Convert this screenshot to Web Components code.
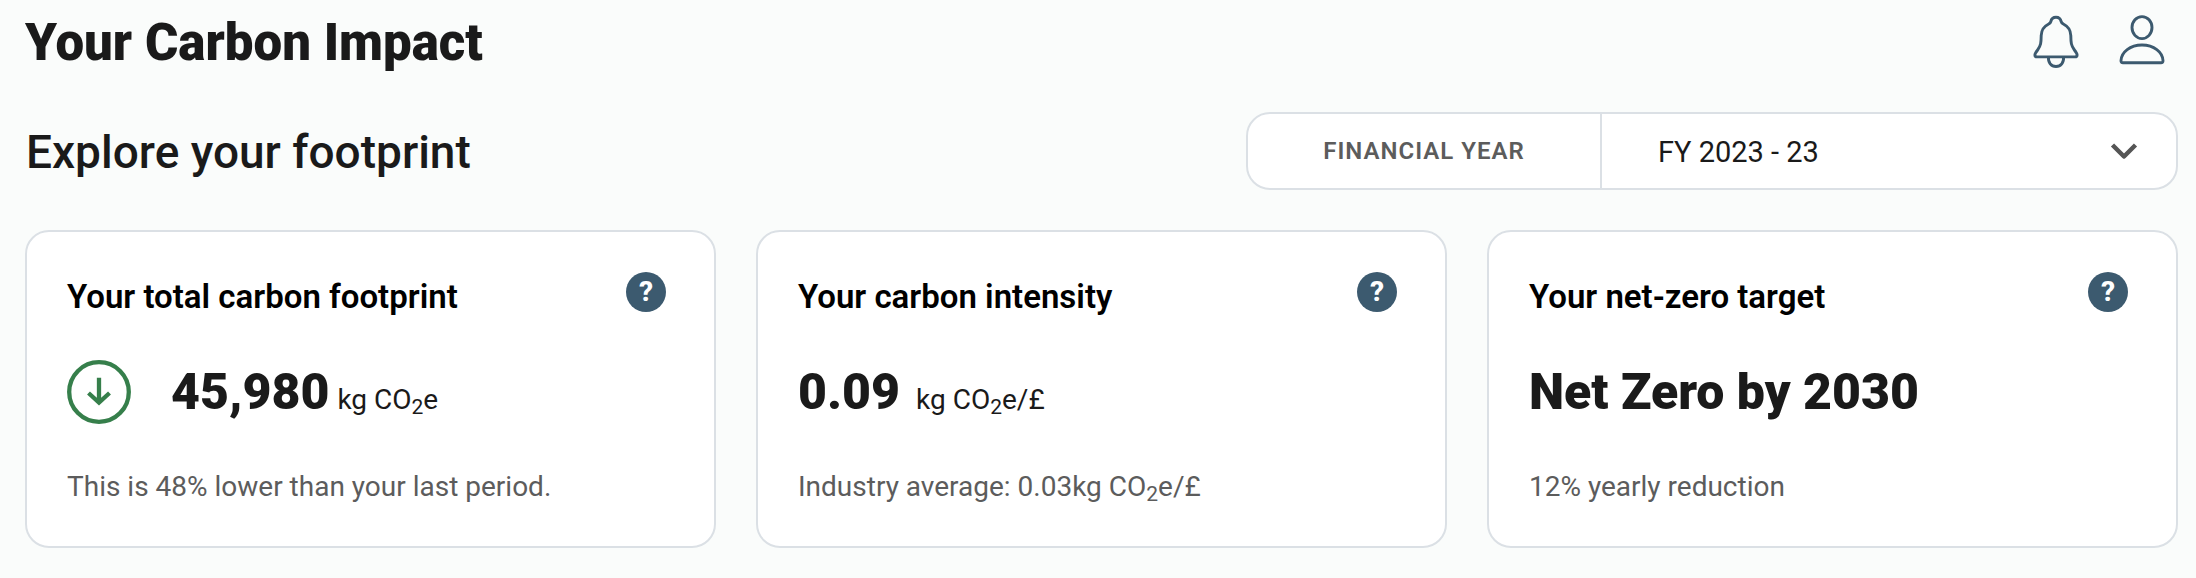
<!DOCTYPE html>
<html lang="en">
<head>
<meta charset="utf-8">
<meta name="viewport" content="width=device-width, initial-scale=1">
<title>Your Carbon Impact</title>
<style>
  body {
    margin: 0;
    background: #fafcfb;
    color: #1a1a1a;
    font-family: Roboto, "Liberation Sans", sans-serif;
    --line: #dbe0e5;
    --accent: #3c5a6f;
    --muted: #5c5c5c;
  }
</style>
</head>
<body>
<carbon-dashboard></carbon-dashboard>

<template id="dashboard">
  <style>
    :host { display: block; padding: 12px 18px 30px 25px; }
    main { display: grid; gap: 40px; }
    header, .explore { display: flex; align-items: center; justify-content: space-between; gap: 40px; }
    h1, h2 { margin: 0; line-height: 60px; }
    h1 { font-size: 51px; font-weight: 900; padding-top: 2px; line-height: 58px; }
    h2 { font-size: 46px; font-weight: 500; padding: 2px 0 0 1px; }
    nav { display: flex; gap: 38px; padding-right: 12px; }
    .cards { display: grid; grid-template-columns: repeat(3, 1fr); gap: 40px; }
    year-select { flex: 0 1 932px; }
  </style>
  <main>
    <header>
      <h1>Your Carbon Impact</h1>
      <nav aria-label="Account">
        <icon-button label="Notifications">
          <svg width="48" height="56" viewBox="0 0 48 56" fill="none" stroke="currentColor" stroke-width="2.9" stroke-linejoin="round">
            <path d="M24 3.2c-3 0-4.600 1.500-5.200 4.400-.3 1.500-1.200 2-2.500 2.600C11.500 12.600 9.400 16 9.200 21.500c-.1 7-.3 10.200-3.600 14.500C3.500 38.700 2.900 39.700 2.900 41c0 1.300.7 1.900 2 1.900h38.200c1.300 0 2-.6 2-1.900 0-1.300-.6-2.300-2.700-5-3.300-4.300-3.500-7.500-3.600-14.500-.2-5.500-2.300-8.900-7.100-11.300-1.300-.6-2.200-1.100-2.500-2.600C28.600 4.700 27 3.200 24 3.200Z"/>
            <path d="M16.500 43c-.6 5.600 2.700 9.500 7.500 9.500s8.100-3.900 7.500-9.500"/>
          </svg>
        </icon-button>
        <icon-button label="Profile">
          <svg width="48" height="56" viewBox="0 0 48 56" fill="none" stroke="currentColor" stroke-width="2.9" stroke-linejoin="round">
            <ellipse cx="24" cy="13.600" rx="10" ry="11"/>
            <path d="M24 31C12 31 3.500 38 3 46.500c-.1 1.500.6 2.200 2 2.200h38c1.400 0 2.100-.7 2-2.200C44.500 38 36 31 24 31Z"/>
          </svg>
        </icon-button>
      </nav>
    </header>
    <section class="explore">
      <h2>Explore your footprint</h2>
      <year-select></year-select>
    </section>
    <section class="cards">
      <metric-card>
        <span slot="title">Your total carbon footprint</span>
        <svg slot="trend" width="64" height="64" viewBox="0 0 64 64" fill="none" stroke="#367f4b" stroke-width="4.300" role="img" aria-label="Down">
          <circle cx="32" cy="32" r="29.800"/>
          <path d="M32 17.700V42M21.500 33 32 42.500 42.500 33"/>
        </svg>
        <span slot="value">45,980</span>
        <carbon-unit slot="unit"></carbon-unit>
        <span slot="note">This is 48% lower than your last period.</span>
      </metric-card>
      <metric-card roomy>
        <span slot="title">Your carbon intensity</span>
        <span slot="value">0.09</span>
        <carbon-unit slot="unit">/£</carbon-unit>
        <span slot="note">Industry average: 0.03<carbon-unit>/£</carbon-unit></span>
      </metric-card>
      <metric-card>
        <span slot="title">Your net-zero target</span>
        <span slot="value">Net Zero by 2030</span>
        <span slot="note">12% yearly reduction</span>
      </metric-card>
    </section>
  </main>
</template>

<template id="icon-button">
  <style>
    :host { display: block; }
    button { display: block; padding: 0; border: 0; background: none; color: var(--accent); cursor: pointer; }
    ::slotted(svg) { display: block; }
  </style>
  <button type="button"><slot></slot></button>
</template>

<template id="carbon-unit"><style>
    :host { display: inline; }
    sub { font-size: 21px; line-height: 0; vertical-align: -5px; }
  </style>kg CO<sub>2</sub>e<slot></slot></template>

<template id="year-select">
  <style>
    :host {
      display: grid; grid-template-columns: 354px 1fr; box-sizing: border-box;
      border: 2px solid var(--line); border-radius: 24px; background: #fff; overflow: hidden;
    }
    label {
      display: grid; place-items: center; border-right: 2px solid var(--line);
      font-size: 24px; font-weight: 600; letter-spacing: 1px; color: var(--muted);
    }
    .field { display: grid; align-items: center; }
    select, svg { grid-area: 1 / 1; }
    select {
      appearance: none; width: 100%; height: 74px; padding: 2px 80px 0 56px; border: 0;
      background: transparent; color: #1a1a1a; font: 400 29px Roboto, "Liberation Sans", sans-serif;
    }
    svg { justify-self: end; margin-right: 36px; pointer-events: none; }
  </style>
  <label for="year">FINANCIAL YEAR</label>
  <div class="field">
    <select id="year"><option>FY 2023 - 23</option></select>
    <svg width="32" height="24" viewBox="0 0 32 24" fill="none" stroke="#555" stroke-width="4.500" stroke-linejoin="round" aria-hidden="true">
      <path d="M4.500 6 16 17.500 27.500 6"/>
    </svg>
  </div>
</template>

<template id="metric-card">
  <style>
    :host {
      display: grid; gap: 40px; padding: 40px 48px 36px 40px;
      border: 2px solid var(--line); border-radius: 24px; background: #fff;
    }
    header { display: flex; justify-content: space-between; align-items: flex-start; }
    h3 { margin: 0; padding-top: 2px; font-size: 33px; font-weight: 600; line-height: 46px; color: #000; }
    button {
      width: 40px; height: 40px; padding: 0; border: 0; border-radius: 50%;
      background: var(--accent); color: #fff; cursor: pointer;
      font: 800 28px/40px Roboto, "Liberation Sans", sans-serif;
    }
    .reading { display: flex; align-items: center; gap: 40px; height: 64px; }
    .figure { display: flex; align-items: baseline; gap: 8px; margin: 0; }
    :host([roomy]) .figure { gap: 16px; }
    .value { font-size: 50px; font-weight: 900; line-height: 60px; }
    .unit { font-size: 28px; line-height: 36px; }
    .note { margin: 0; font-size: 28px; line-height: 46px; color: var(--muted); }
  </style>
  <header>
    <h3><slot name="title"></slot></h3>
    <button type="button" aria-label="Help">?</button>
  </header>
  <div class="reading">
    <slot name="trend"></slot>
    <p class="figure"><span class="value"><slot name="value"></slot></span><span class="unit"><slot name="unit"></slot></span></p>
  </div>
  <p class="note"><slot name="note"></slot></p>
</template>

<script>
  class TemplateElement extends HTMLElement {
    constructor() {
      super();
      const template = document.getElementById(this.constructor.template);
      this.attachShadow({ mode: "open" }).append(template.content.cloneNode(true));
    }
  }
  class IconButton extends TemplateElement {
    static template = "icon-button";
    connectedCallback() {
      this.shadowRoot.querySelector("button").setAttribute("aria-label", this.getAttribute("label"));
    }
  }
  class CarbonUnit extends TemplateElement { static template = "carbon-unit"; }
  class YearSelect extends TemplateElement { static template = "year-select"; }
  class MetricCard extends TemplateElement { static template = "metric-card"; }
  class CarbonDashboard extends TemplateElement { static template = "dashboard"; }

  customElements.define("icon-button", IconButton);
  customElements.define("carbon-unit", CarbonUnit);
  customElements.define("year-select", YearSelect);
  customElements.define("metric-card", MetricCard);
  customElements.define("carbon-dashboard", CarbonDashboard);
</script>
</body>
</html>
